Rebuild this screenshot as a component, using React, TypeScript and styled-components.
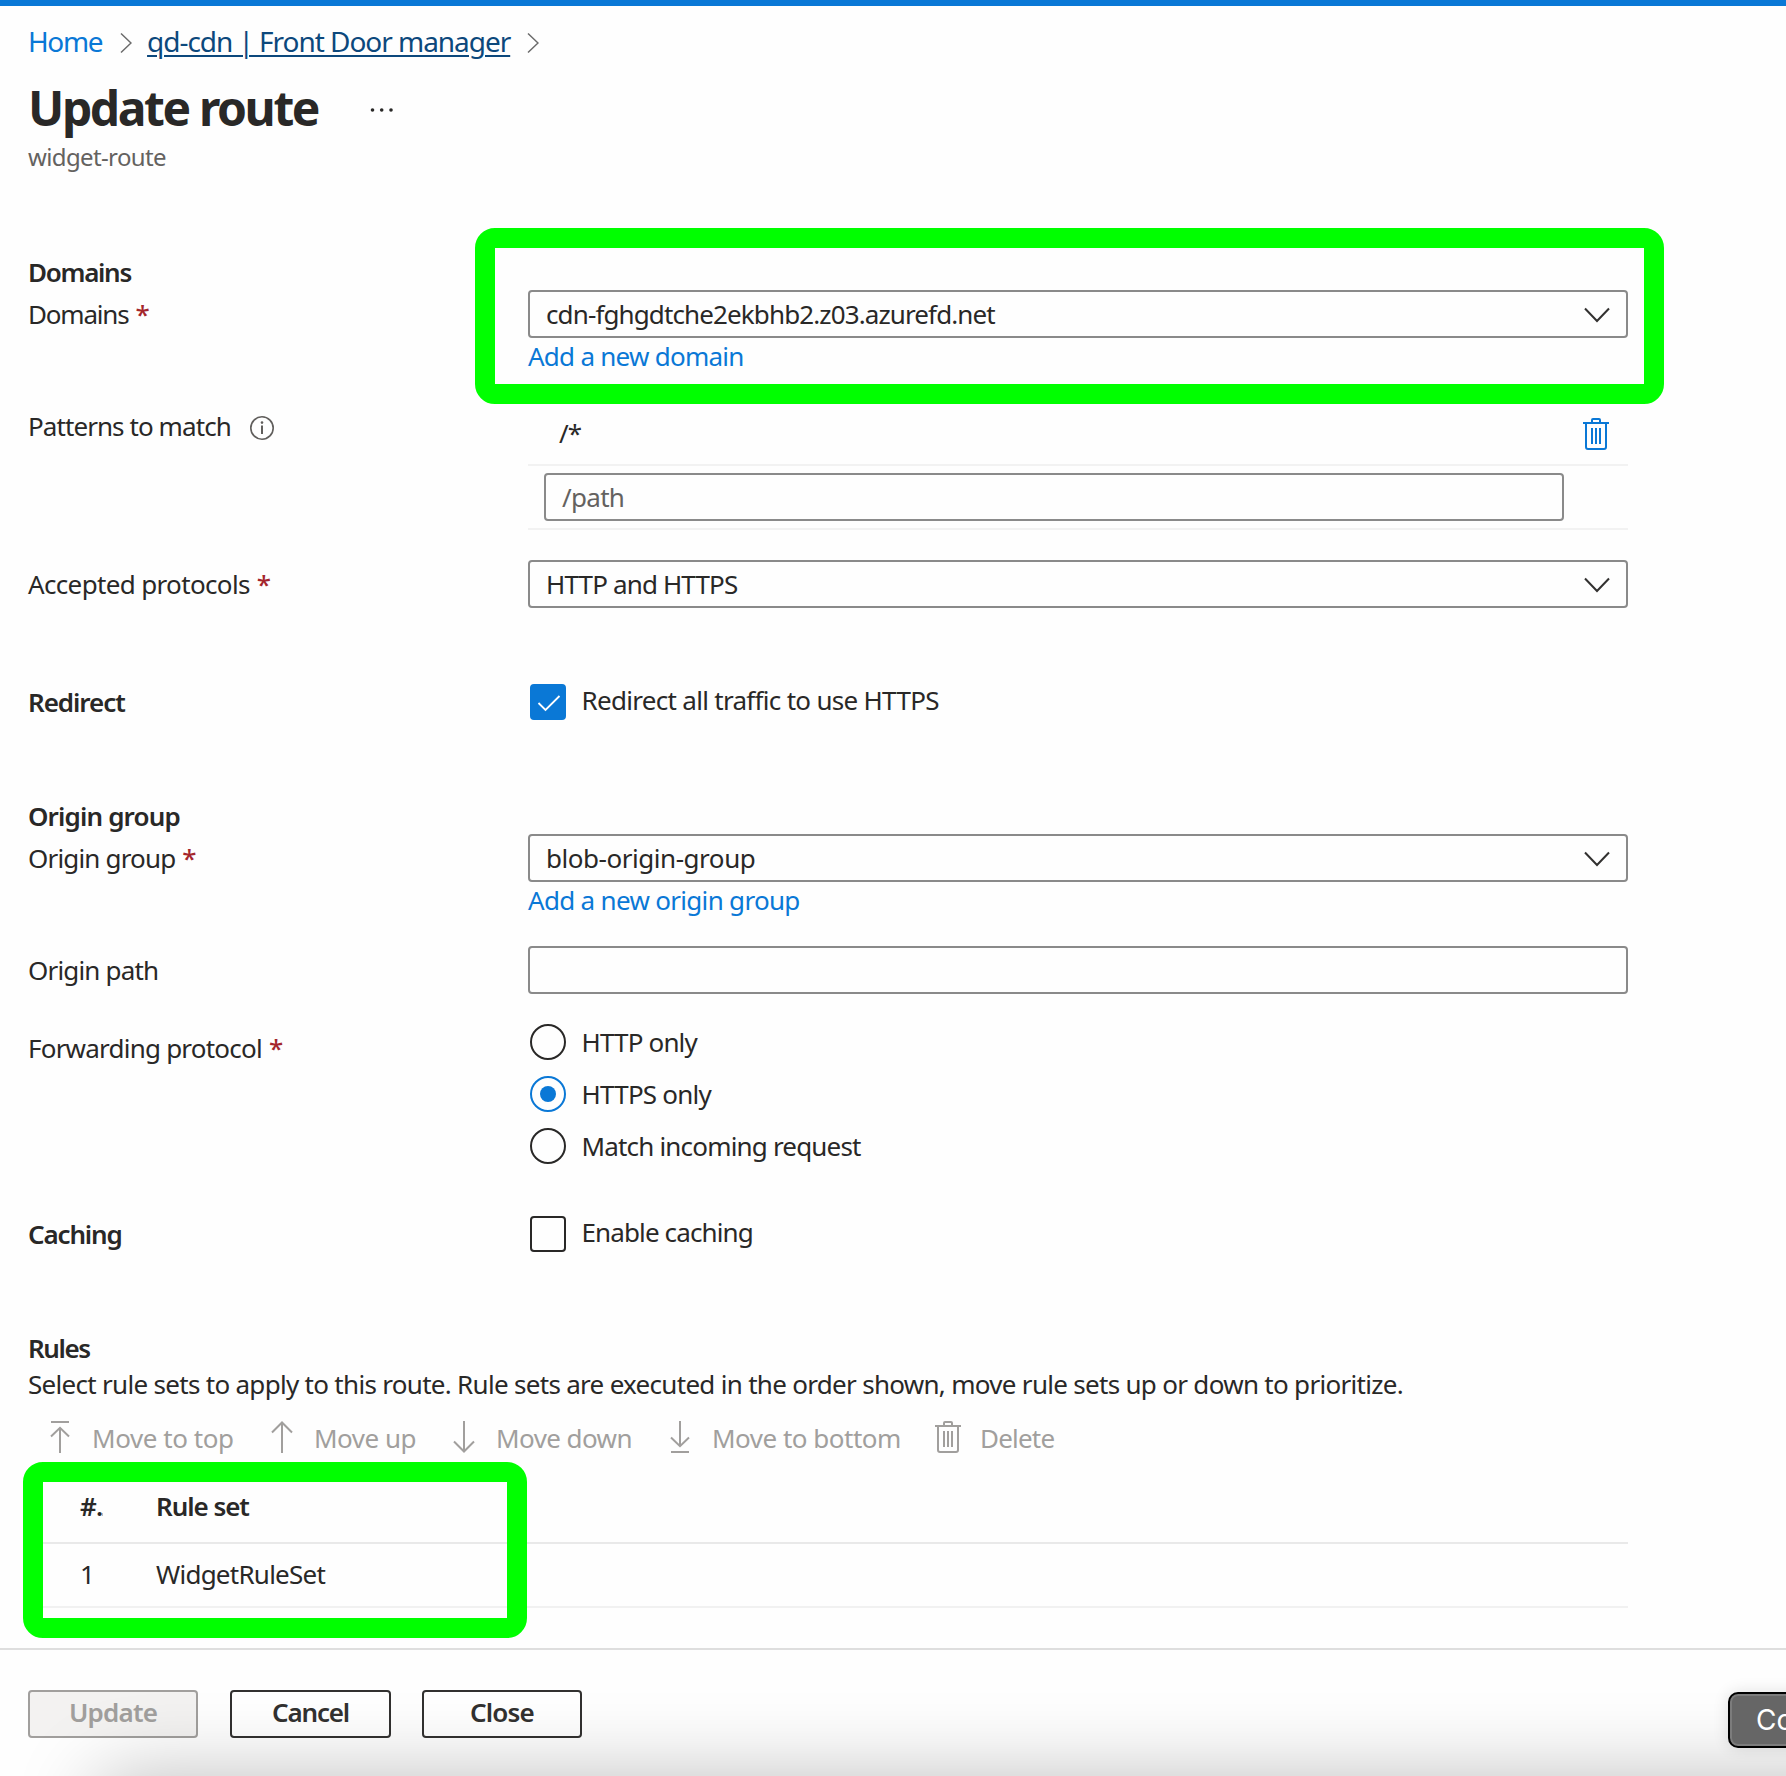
import React from "react";
import styled, { createGlobalStyle, css } from "styled-components";

const color = {
  text: "#292827",
  subtle: "#646260",
  link: "#0a78d6",
  linkHover: "#0c487c",
  border: "#8a8a8a",
  disabled: "#a19f9d",
  required: "#a4262c",
  marker: "#00ff00",
};

const GlobalStyle = createGlobalStyle`
  * { box-sizing: border-box; }
  html, body { margin: 0; padding: 0; background: #fefefe; }
  body { overflow: hidden; }
`;

/* ---------- shared type ---------- */

const Text = styled.span<{ $track?: number; $bold?: boolean }>`
  font-size: 26px;
  line-height: 36px;
  font-weight: ${(p) => (p.$bold ? 650 : 400)};
  letter-spacing: ${(p) => p.$track ?? -0.7}px;
  white-space: nowrap;
`;

const Page = styled.div`
  position: relative;
  display: flex;
  flex-direction: column;
  width: 1786px;
  height: 1776px;
  overflow: hidden;
  background: #fefefe;
  color: ${color.text};
  font-family: "Noto Sans", "Open Sans", sans-serif;
`;

const TopBar = styled.div`
  flex: none;
  height: 6px;
  background: ${color.link};
`;

/* ---------- header ---------- */

const Header = styled.header`
  display: flex;
  flex-direction: column;
  padding: 15px 28px 0;
`;

const Breadcrumb = styled.nav`
  display: flex;
  align-items: center;
  height: 40px;
`;

const Crumb = styled.a<{ $active?: boolean; $track: number }>`
  font-size: 28px;
  line-height: 40px;
  letter-spacing: ${(p) => p.$track}px;
  white-space: nowrap;
  color: ${(p) => (p.$active ? color.linkHover : color.link)};
  ${(p) =>
    p.$active &&
    css`
      text-decoration: underline;
      text-decoration-thickness: 2px;
      text-underline-offset: 3px;
    `}
`;

const CrumbChevron = styled.svg<{ $before: number; $after: number }>`
  flex: none;
  width: 12px;
  height: 22px;
  margin: 4px ${(p) => p.$after}px 0 ${(p) => p.$before}px;
  fill: none;
  stroke: #6b6b6b;
  stroke-width: 1.5;
`;

const TitleRow = styled.div`
  display: flex;
  align-items: center;
  height: 64px;
  margin-top: 15px;
`;

const Title = styled.h1`
  width: 342px;
  margin: 0;
  font-size: 48px;
  line-height: 64px;
  font-weight: 660;
  letter-spacing: -2.4px;
  white-space: nowrap;
`;

const MoreIcon = styled.svg`
  width: 24px;
  height: 6px;
  margin-top: 3px;
  fill: ${color.text};
`;

const Subtitle = styled.div`
  margin-top: 1px;
  font-size: 24px;
  line-height: 32px;
  letter-spacing: -0.63px;
  color: ${color.subtle};
`;

/* ---------- form ---------- */

const Form = styled.main`
  display: flex;
  flex-direction: column;
  width: 1628px;
  padding-left: 28px;
`;

const Section = styled.section<{ $gap: number }>`
  display: flex;
  flex-direction: column;
  margin-top: ${(p) => p.$gap}px;
`;

const Row = styled.div<{ $gap?: number }>`
  display: grid;
  grid-template-columns: 500px 1100px;
  align-items: start;
  margin-top: ${(p) => p.$gap ?? 0}px;
`;

const Label = styled.label<{ $pad?: number }>`
  display: flex;
  align-items: center;
  padding-top: ${(p) => p.$pad ?? 6}px;
`;

const Required = styled(Text).attrs({ children: "*" })`
  margin-left: 7px;
  font-weight: 500;
  color: ${color.required};
`;

const InfoIcon = styled.svg`
  width: 26px;
  height: 26px;
  margin: 3px 0 0 18px;
`;

const Stack = styled.div<{ $gap?: number }>`
  display: flex;
  flex-direction: column;
  align-items: stretch;
  gap: ${(p) => p.$gap ?? 0}px;
`;

const Field = styled.div<{ $width?: number }>`
  display: flex;
  align-items: center;
  justify-content: space-between;
  width: ${(p) => (p.$width ? `${p.$width}px` : "100%")};
  height: 48px;
  padding: 0 16px;
  border: 2px solid ${color.border};
  border-radius: 4px;
`;

const Placeholder = styled(Text)`
  color: ${color.subtle};
`;

const FieldChevron = styled.svg`
  width: 26px;
  height: 16px;
  margin-top: 1px;
  fill: none;
  stroke: #323130;
  stroke-width: 2;
`;

const Link = styled(Text).attrs({ as: "a" })`
  color: ${color.link};
`;

const PatternRow = styled.div<{ $kind: "value" | "input" }>`
  display: flex;
  align-items: center;
  justify-content: space-between;
  height: ${(p) => (p.$kind === "input" ? 64 : 66)}px;
  padding: ${(p) => (p.$kind === "input" ? "0 16px" : "1px 18px 0 31px")};
  border-bottom: 2px solid #f2f2f2;
`;

const TrashSvg = styled.svg<{ $tone: string }>`
  display: block;
  width: 28px;
  height: 34px;
  fill: none;
  stroke: ${(p) => p.$tone};
  stroke-width: 2;
`;

const PatternDelete = styled.span`
  margin-top: 3px;
`;

const Choice = styled.div<{ $lift?: number }>`
  display: flex;
  align-items: center;
  gap: 15.5px;
  height: 36px;
  padding-left: 2px;

  ${Text} {
    margin-top: ${(p) => -2 * (p.$lift ?? 0)}px;
  }
`;

const CheckBox = styled.span<{ $checked?: boolean }>`
  display: flex;
  align-items: center;
  justify-content: center;
  width: 36px;
  height: 36px;
  border: 2px solid ${(p) => (p.$checked ? color.link : color.text)};
  border-radius: 4px;
  background: ${(p) => (p.$checked ? color.link : "transparent")};
`;

const CheckMark = styled.svg`
  width: 24px;
  height: 18px;
  margin: 2px 0 0 2px;
  fill: none;
  stroke: #fff;
  stroke-width: 1.8;
`;

const Radio = styled.span<{ $checked?: boolean }>`
  display: flex;
  align-items: center;
  justify-content: center;
  width: 36px;
  height: 36px;
  border: 2px solid ${(p) => (p.$checked ? color.link : color.text)};
  border-radius: 50%;

  &::after {
    content: "";
    width: 16px;
    height: 16px;
    border-radius: 50%;
    background: ${(p) => (p.$checked ? color.link : "transparent")};
  }
`;

/* ---------- rules ---------- */

const Toolbar = styled.div`
  display: grid;
  grid-template-columns: 222px 182px 216px 268px auto;
  height: 36px;
  margin-top: 16px;
  padding-left: 16px;
  color: ${color.disabled};
`;

const Tool = styled.div`
  display: flex;
  align-items: center;
  gap: 16px;

  ${Text} {
    margin-top: 2px;
  }
`;

const ToolIcon = styled.span`
  display: flex;
  justify-content: center;
  width: 32px;
`;

const ArrowSvg = styled.svg<{ $flip?: boolean }>`
  display: block;
  width: 26px;
  height: 32px;
  fill: none;
  stroke: ${color.disabled};
  stroke-width: 2;
  transform: ${(p) => (p.$flip ? "scaleY(-1)" : "none")};
`;

const TableRow = styled.div<{ $head?: boolean }>`
  display: grid;
  grid-template-columns: 76px 1fr;
  align-items: center;
  height: ${(p) => (p.$head ? 74 : 64)}px;
  margin-top: ${(p) => (p.$head ? 16 : 0)}px;
  padding: 0 0 ${(p) => (p.$head ? 0 : 3)}px 52px;
  border-bottom: 2px solid ${(p) => (p.$head ? "#e9e9e9" : "#f1f1f1")};
`;

const IndexHead = styled.span`
  display: flex;
  align-items: center;

  &::after {
    content: "";
    width: 1px;
    height: 3px;
    margin: 17px 0 0 0;
    background: #bdbdbd;
  }
`;

/* ---------- footer ---------- */

const Footer = styled.footer`
  display: flex;
  flex: 1;
  align-items: flex-start;
  margin-top: 40px;
  padding: 40px 28px 0;
  border-top: 2px solid #dedede;
`;

const Button = styled.button<{ $width: number; $gap?: number }>`
  display: flex;
  align-items: center;
  justify-content: center;
  width: ${(p) => p.$width}px;
  height: 48px;
  margin: 0 ${(p) => p.$gap ?? 0}px 0 0;
  padding: 0 0 4px;
  border: 2px solid #323130;
  border-radius: 4px;
  background: #fff;
  color: #323130;
  font-family: inherit;

  &:disabled {
    border-color: ${color.disabled};
    background: #f3f2f1;
    color: ${color.disabled};
  }
`;

/* ---------- overlays ---------- */

const Marker = styled.div<{ $x: number; $y: number; $w: number }>`
  position: absolute;
  left: ${(p) => p.$x}px;
  top: ${(p) => p.$y}px;
  width: ${(p) => p.$w}px;
  height: 176px;
  border: 20px solid ${color.marker};
  border-radius: 20px;
  pointer-events: none;
`;

const WindowShadow = styled.div`
  position: absolute;
  left: 96px;
  top: 1776px;
  width: 2000px;
  height: 200px;
  border-radius: 30px;
  box-shadow: 0 0 80px rgba(0, 0, 0, 0.25);
  pointer-events: none;
`;

const Tooltip = styled.div`
  position: absolute;
  left: 1728px;
  top: 1692px;
  width: 120px;
  height: 56px;
  padding-left: 26px;
  border: 2px solid #000;
  border-radius: 10px;
  background: #666;
  box-shadow: inset 0 0 0 2px #7c7c7c, 0 0 16px rgba(0, 0, 0, 0.12);
  color: #fff;
  font-family: Inter, Roboto, sans-serif;
  font-size: 28px;
  line-height: 53px;
`;

/* ---------- icons ---------- */

const Chevron = () => (
  <FieldChevron viewBox="0 0 26 16">
    <path d="M1 1.5 L13 14 L25 1.5" />
  </FieldChevron>
);

const Trash = ({ tone }: { tone: string }) => (
  <TrashSvg viewBox="0 0 28 34" $tone={tone}>
    <path d="M1 6 H27" />
    <path d="M10 6 V3 Q10 2 11 2 H17 Q18 2 18 3 V6" />
    <path d="M4 6 V30 Q4 32 6 32 H22 Q24 32 24 30 V6" />
    <path d="M10 11 V27 M14 11 V27 M18 11 V27" />
  </TrashSvg>
);

const Arrow = ({ flip }: { flip?: boolean }) => (
  <ArrowSvg viewBox="0 0 26 32" $flip={flip}>
    <path d="M13 32 V2 M3 11.5 L13 1.5 L23 11.5" />
  </ArrowSvg>
);

const ArrowToBar = ({ flip }: { flip?: boolean }) => (
  <ArrowSvg viewBox="0 0 26 32" $flip={flip}>
    <path d="M4 1 H22 M13 32 V7.5 M4 15.5 L13 6.8 L22 15.5" />
  </ArrowSvg>
);

const CrumbArrow = ({ before, after }: { before: number; after: number }) => (
  <CrumbChevron viewBox="0 0 12 22" $before={before} $after={after}>
    <path d="M1 1.5 L11 11 L1 20.5" />
  </CrumbChevron>
);

const protocols = [
  { name: "HTTP only", track: -0.84 },
  { name: "HTTPS only", track: -0.77, checked: true },
  { name: "Match incoming request", track: -0.82 },
];

const tools = [
  { name: "Move to top", icon: <ArrowToBar />, track: -0.44 },
  { name: "Move up", icon: <Arrow />, track: -0.5 },
  { name: "Move down", icon: <Arrow flip />, track: -0.58 },
  { name: "Move to bottom", icon: <ArrowToBar flip />, track: -0.5 },
  { name: "Delete", icon: <Trash tone={color.disabled} />, track: -0.8 },
];

export default function App() {
  return (
    <Page>
      <GlobalStyle />
      <TopBar />
      <Header>
        <Breadcrumb>
          <Crumb $track={-1.4}>Home</Crumb>
          <CrumbArrow before={18} after={15} />
          <Crumb $active $track={-1.04}>
            qd-cdn | Front Door manager
          </Crumb>
          <CrumbArrow before={17} after={0} />
        </Breadcrumb>
        <TitleRow>
          <Title>Update route</Title>
          <MoreIcon viewBox="0 0 24 6">
            <circle cx="2.5" cy="3" r="1.8" />
            <circle cx="11.7" cy="3" r="1.8" />
            <circle cx="21" cy="3" r="1.8" />
          </MoreIcon>
        </TitleRow>
        <Subtitle>widget-route</Subtitle>
      </Header>

      <Form>
        <Section $gap={81}>
          <Text $bold $track={-1.3}>Domains</Text>
          <Row>
            <Label>
              <Text $track={-1.2}>Domains</Text>
              <Required />
            </Label>
            <Stack>
              <Field>
                <Text $track={-0.88}>cdn-fghgdtche2ekbhb2.z03.azurefd.net</Text>
                <Chevron />
              </Field>
              <Link $track={-0.74}>Add a new domain</Link>
            </Stack>
          </Row>
          <Row $gap={26}>
            <Label $pad={8}>
              <Text $track={-0.92}>Patterns to match</Text>
              <InfoIcon viewBox="0 0 26 26">
                <circle cx="13" cy="13" r="11.2" fill="none" stroke="#605e5c" strokeWidth="1.6" />
                <path d="M13 10.5 V19" stroke="#605e5c" strokeWidth="2" />
                <circle cx="13" cy="7.6" r="1.3" fill="#605e5c" />
              </InfoIcon>
            </Label>
            <Stack>
              <PatternRow $kind="value">
                <Text $track={-1}>/*</Text>
                <PatternDelete>
                  <Trash tone={color.link} />
                </PatternDelete>
              </PatternRow>
              <PatternRow $kind="input">
                <Field $width={1020}>
                  <Placeholder>/path</Placeholder>
                </Field>
              </PatternRow>
            </Stack>
          </Row>
          <Row $gap={30}>
            <Label>
              <Text $track={-0.65}>Accepted protocols</Text>
              <Required />
            </Label>
            <Field>
              <Text $track={-0.85}>HTTP and HTTPS</Text>
              <Chevron />
            </Field>
          </Row>
        </Section>

        <Section $gap={76}>
          <Row>
            <Text $bold $track={-1.05}>Redirect</Text>
            <Choice $lift={2}>
              <CheckBox $checked>
                <CheckMark viewBox="0 0 24 18">
                  <path d="M1.5 9 L8.5 16 L22.5 2" />
                </CheckMark>
              </CheckBox>
              <Text>Redirect all traffic to use HTTPS</Text>
            </Choice>
          </Row>
        </Section>

        <Section $gap={78}>
          <Text $bold $track={-0.85}>Origin group</Text>
          <Row>
            <Label>
              <Text $track={-0.83}>Origin group</Text>
              <Required />
            </Label>
            <Stack>
              <Field>
                <Text $track={-0.46}>blob-origin-group</Text>
                <Chevron />
              </Field>
              <Link $track={-0.69}>Add a new origin group</Link>
            </Stack>
          </Row>
          <Row $gap={28}>
            <Label>
              <Text $track={-0.82}>Origin path</Text>
            </Label>
            <Field />
          </Row>
          <Row $gap={30}>
            <Label>
              <Text $track={-0.78}>Forwarding protocol</Text>
              <Required />
            </Label>
            <Stack $gap={16}>
              {protocols.map((p) => (
                <Choice key={p.name}>
                  <Radio $checked={p.checked} />
                  <Text $track={p.track}>{p.name}</Text>
                </Choice>
              ))}
            </Stack>
          </Row>
        </Section>

        <Section $gap={52}>
          <Row>
            <Text $bold $track={-1.15}>Caching</Text>
            <Choice $lift={2}>
              <CheckBox />
              <Text $track={-0.88}>Enable caching</Text>
            </Choice>
          </Row>
        </Section>

        <Section $gap={78}>
          <Text $bold $track={-1.4}>Rules</Text>
          <Text $track={-0.7}>
            Select rule sets to apply to this route. Rule sets are executed in the order shown, move rule sets up or down to prioritize.
          </Text>
          <Toolbar>
            {tools.map((t) => (
              <Tool key={t.name}>
                <ToolIcon>{t.icon}</ToolIcon>
                <Text $track={t.track}>{t.name}</Text>
              </Tool>
            ))}
          </Toolbar>
          <TableRow $head>
            <IndexHead>
              <Text $bold $track={-0.8}>#.</Text>
            </IndexHead>
            <Text $bold $track={-1.05}>Rule set</Text>
          </TableRow>
          <TableRow>
            <Text>1</Text>
            <Text $track={-0.75}>WidgetRuleSet</Text>
          </TableRow>
        </Section>
      </Form>

      <Footer>
        <Button disabled $width={170} $gap={32}>
          <Text $bold $track={-0.8}>Update</Text>
        </Button>
        <Button $width={161} $gap={31}>
          <Text $bold $track={-1.2}>Cancel</Text>
        </Button>
        <Button $width={160}>
          <Text $bold $track={-0.8}>Close</Text>
        </Button>
      </Footer>

      <Marker $x={475} $y={228} $w={1189} />
      <Marker $x={23} $y={1462} $w={504} />
      <WindowShadow />
      <Tooltip>Co</Tooltip>
    </Page>
  );
}
